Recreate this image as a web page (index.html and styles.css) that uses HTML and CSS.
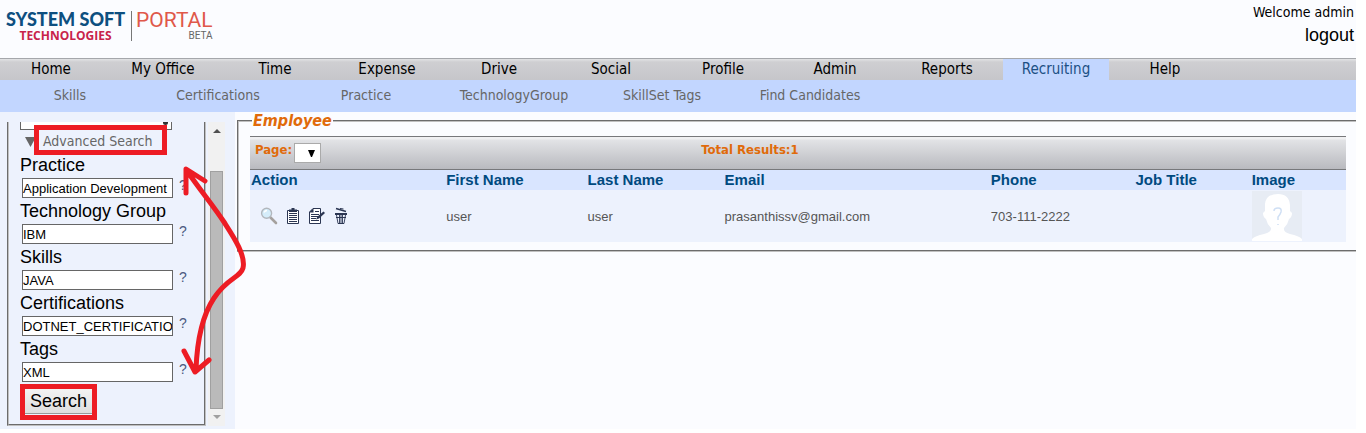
FILE: index.html
```html
<!DOCTYPE html>
<html lang="en">
<head>
<meta charset="utf-8">
<title>System Soft Portal</title>
<link rel="stylesheet" href="styles.css">
</head>
<body>
<div class="page">
  <header class="header">
    <div class="logo">
      <div class="brand"><span class="brand-name">SYSTEM SOFT</span><span class="brand-sub">TECHNOLOGIES</span></div>
      <div class="portal"><span class="portal-name">PORTAL</span><span class="portal-beta">BETA</span></div>
    </div>
    <div class="account"><span class="welcome">Welcome admin</span><a class="logout" href="#">logout</a></div>
  </header>
  <nav class="mainnav">
    <a href="#">Home</a><a href="#">My Office</a><a href="#">Time</a><a href="#">Expense</a><a href="#">Drive</a><a href="#">Social</a><a href="#">Profile</a><a href="#">Admin</a><a href="#">Reports</a><a href="#" class="active">Recruiting</a><a href="#">Help</a>
  </nav>
  <nav class="subnav">
    <a href="#">Skills</a><a href="#">Certifications</a><a href="#">Practice</a><a href="#">TechnologyGroup</a><a href="#">SkillSet Tags</a><a href="#">Find Candidates</a>
  </nav>
  <div class="content">
    <aside class="sidebar">
      <form class="panel">
        <div class="cut-field"><span></span></div>
        <button type="button" class="advanced"><svg width="11" height="10" viewBox="0 0 11 10"><path d="M0 0H11L5.5 10Z" fill="#666"/></svg>Advanced Search</button>
        <label for="practice">Practice</label>
        <div class="field"><input id="practice" value="Application Development"><span>?</span></div>
        <label for="group">Technology Group</label>
        <div class="field"><input id="group" value="IBM"><span>?</span></div>
        <label for="skills">Skills</label>
        <div class="field"><input id="skills" value="JAVA"><span>?</span></div>
        <label for="certs">Certifications</label>
        <div class="field"><input id="certs" value="DOTNET_CERTIFICATION"><span>?</span></div>
        <label for="tags">Tags</label>
        <div class="field"><input id="tags" value="XML"><span>?</span></div>
        <button type="button" class="search">Search</button>
      </form>
      <div class="scrollbar">
        <svg width="8" height="4" viewBox="0 0 8 4"><path d="M0 4L4 0L8 4Z" fill="#505050"/></svg>
        <div class="thumb"></div>
        <svg width="8" height="4" viewBox="0 0 8 4"><path d="M0 0L4 4L8 0Z" fill="#a0a0a0"/></svg>
      </div>
    </aside>
    <main class="main">
      <fieldset class="results">
        <legend>Employee</legend>
        <div class="toolbar">
          <label for="page">Page:</label>
          <div class="pager"><select id="page"><option></option></select><svg width="7" height="7" viewBox="0 0 7 7"><path d="M0 0H7L4 7H3Z" fill="#000"/></svg></div>
          <span class="total">Total Results:1</span>
        </div>
        <table>
          <colgroup><col class="c-action"><col class="c-first"><col class="c-last"><col class="c-email"><col class="c-phone"><col class="c-job"><col class="c-image"></colgroup>
          <thead><tr><th>Action</th><th>First Name</th><th>Last Name</th><th>Email</th><th>Phone</th><th>Job Title</th><th>Image</th></tr></thead>
          <tbody><tr>
            <td><div class="actions">
              <button type="button" aria-label="View"><svg width="18" height="18" viewBox="0 0 18 18"><path d="M10.5 10.5L16 16" stroke="#a5a19e" stroke-width="2.6" stroke-linecap="round"/><circle cx="6.6" cy="6.3" r="5" fill="#d5edfa" stroke="#b2b7bd" stroke-width="1.4"/><path d="M4 5.5Q5 3.5 7 3.5" fill="none" stroke="#fff" stroke-width="1.4"/></svg></button>
              <button type="button" aria-label="Details"><svg width="18" height="18" viewBox="0 0 18 18"><path d="M3.500 3.500H14.500V16.500H3.500Z" fill="#fff" stroke="#2b3652"/><path d="M5 5V2.500H7.500V1H10.500V2.500H13V5Z" fill="#2b3652"/><path d="M5 6.500H13M5 8.500H13M5 10.500H13M5 12.500H13M5 14.500H13" stroke="#2b3652"/></svg></button>
              <button type="button" aria-label="Edit"><svg width="18" height="18" viewBox="0 0 18 18"><path d="M5 1.500H12.500V16.500H1.500V5Z" fill="#fff" stroke="#2b3652"/><path d="M1 5.500L5.500 1V5.500Z" fill="#2b3652"/><path d="M7 4.500H11M3 7.500H11M3 9.500H11M3 11.500H8M3 13.500H11" stroke="#2b3652"/><path d="M8 12.500L9.500 9.500L15.500 4.500L17 6L11 11.500Z" fill="#2b3652"/></svg></button>
              <button type="button" aria-label="Delete"><svg width="18" height="18" viewBox="0 0 18 18"><path d="M4 1.500L14 4.500" stroke="#2b3652" stroke-width="1.500"/><path d="M8 1.500L11.500 2" stroke="#2b3652"/><path d="M3 7H15" stroke="#2b3652" stroke-width="2"/><path d="M4.500 8L6 16.500M13.500 8L12 16.500M7.500 8V16M10.500 8V16M9 8V16" fill="none" stroke="#2b3652" stroke-width=".9"/><path d="M4 10.500H14M6 16.500H12" stroke="#2b3652"/></svg></button>
            </div></td>
            <td>user</td><td>user</td><td>prasanthissv@gmail.com</td><td>703-111-2222</td><td></td>
            <td><svg class="avatar" width="50" height="50" viewBox="0 0 50 50"><rect width="50" height="50" fill="#e7ecf4"/><path d="M0 50V48Q3 45 12 43Q20 41 19 37Q15 33 14 28Q11 26 11 22L13 20V13Q14 3 26 3Q37 3 38 14V20L40 22Q40 26 37 28Q36 33 32 37Q31 41 38 43Q47 45 50 48V50Z" fill="#fff"/><path d="M22 20Q22 17 26 17Q30 17 29 21Q28 24 26 26V29M26 33V34" fill="none" stroke="#cfdff4" stroke-width="1.500"/></svg></td>
          </tr></tbody>
        </table>
      </fieldset>
    </main>
  </div>
  <svg class="markup" width="260" height="433" viewBox="0 0 260 433" fill="none" stroke="#ed1c24">
    <rect x="36.500" y="127.500" width="128" height="25" stroke-width="5"/>
    <rect x="22.500" y="386.500" width="72" height="31" stroke-width="5"/>
    <path d="M187 171C201 191 214 207 224 222C233 236 246 255 243 268C240 278 228 277 214 298C202 316 197 340 196 370M186 193L186 169L205 181M184 351L195 372L209 360" stroke-width="5" stroke-linecap="round" stroke-linejoin="round"/>
  </svg>
</div>
</body>
</html>
```
FILE: styles.css
```css
* { box-sizing: border-box; }
body { margin: 0; background: #fff; font-family: "Liberation Sans", Arial, sans-serif; color: #000; }
a { color: inherit; text-decoration: none; }
button { font: inherit; border: 0; background: none; padding: 0; }
svg { display: block; }
.page { position: relative; margin: 0 10px 4px 0; background: #fbfcff; }
.header { display: flex; justify-content: space-between; height: 58px; padding: 2px 2px 0 6px; }
.logo { display: flex; padding-top: 6px; gap: 6px; }
.brand { display: flex; flex-direction: column; align-items: center; padding-top: 1px; }
.brand-name { color: #0d4f80; font: 900 18px/20px Lato, sans-serif; }
.brand-sub { color: #c8234a; font: bold 12px/14px "Open Sans", sans-serif; }
.portal { display: flex; flex-direction: column; align-items: flex-end; border-left: 1px solid #777; padding-left: 4px; height: 30px; margin-top: 3px; font-family: Roboto, sans-serif; }
.portal-name { color: #e0584a; font-size: 21px; line-height: 19px; }
.portal-beta { color: #666; font-size: 10px; line-height: 12px; }
.account { display: flex; flex-direction: column; align-items: flex-end; }
.welcome { font: 14px/20px "DejaVu Sans Condensed", Tahoma, sans-serif; }
.logout { font-size: 18px; line-height: 26px; }
.mainnav, .subnav { display: flex; font-family: "DejaVu Sans Condensed", Tahoma, sans-serif; text-align: center; white-space: nowrap; }
.mainnav { height: 22px; border-top: 1px solid #a5a7ab; background: linear-gradient(#e2e3e5, #cfcfd2 3px, #c6c6ca); font-size: 15px; line-height: 21px; }
.mainnav a { flex: 0 0 112px; }
.mainnav a:first-child { flex-basis: 107px; padding-right: 5px; }
.mainnav .active { flex-basis: 106px; background: #c2d6ff; color: #1c5084; }
.subnav { height: 32px; background: #c2d6ff; color: #666; font-size: 14px; line-height: 30px; }
.subnav a { flex: 0 0 148px; }
.subnav a:first-child { flex-basis: 144px; padding-right: 4px; }
.content { display: flex; align-items: stretch; }
.sidebar { flex: 0 0 235px; display: flex; padding: 10px 10px 3px 7px; background: #edf2fd; }
.panel { display: flex; flex-direction: column; align-items: flex-start; width: 199px; border: 2px groove #c0c0c0; border-top: 0; padding: 0 0 10px 11px; }
.cut-field { width: 152px; height: 8px; border: 1px solid #666; border-top: 0; background: #fff; }
.cut-field span { display: block; width: 5px; height: 3px; margin-left: 142px; background: #333; border-radius: 0 0 4px 4px; }
.advanced { display: flex; align-items: center; gap: 7px; height: 23px; margin-left: 5px; color: #666; font: 14px/23px "DejaVu Sans Condensed", Tahoma, sans-serif; white-space: nowrap; }
.panel label { font-size: 18px; line-height: 25px; }
.field { display: flex; align-items: flex-start; gap: 6px; padding-left: 2px; height: 21px; }
.field input { width: 151px; height: 20px; padding: 0; border: 1px solid #666; background: #fff; font: 13px "Liberation Sans", Arial, sans-serif; color: #000; }
.field span { color: #4c5a80; font-size: 14px; line-height: 14px; }
.search { margin: 6px 0 0 5px; width: 67px; height: 25px; border-bottom: 1px solid #999; background: linear-gradient(#f3f3f3, #dedede); font-size: 18px; line-height: 22px; }
.scrollbar { display: flex; flex-direction: column; align-items: center; width: 17px; margin-left: 2px; padding: 7px 0; background: #f1f1f1; }
.thumb { width: 13px; flex: 1; margin: 38px 0 6px; background: #bababa; border: 1px solid #a0a0a0; }
.main { flex: 1; min-width: 0; padding-left: 2px; }
.results { margin: 0; border: 2px groove #c0c0c0; border-right: 0; padding: 6px 10px 8px 11px; min-width: 0; }
legend { padding: 0 1px; margin-left: 2px; color: #e06a0a; font: italic bold 16px/18px "DejaVu Sans Condensed", Tahoma, sans-serif; }
.toolbar { display: flex; align-items: flex-start; height: 34px; padding: 4px 5px; border-top: 1px solid #77787b; border-bottom: 1px solid #77787b; background: linear-gradient(#f0f0f2 2px, #e2e3e6 3px, #b9babf); color: #e06a0a; font: bold 13px/18px "DejaVu Sans Condensed", Tahoma, sans-serif; }
.pager { display: grid; align-items: center; width: 27px; margin: 2px 0 0 2px; }
.pager select { grid-area: 1 / 1; appearance: none; width: 27px; height: 20px; border: 1px solid #aaa; background: #fff; }
.pager svg { grid-area: 1 / 1; margin-left: 14px; pointer-events: none; }
.total { flex: 1; margin-left: 35%; }
table { width: 100%; table-layout: fixed; border-collapse: collapse; }
.c-action { width: 17.9%; }
.c-first { width: 12.9%; }
.c-last { width: 12.5%; }
.c-email { width: 24.3%; }
.c-phone { width: 13.2%; }
.c-job { width: 10.6%; }
th { height: 20px; padding: 0; text-align: left; background: #d9e5ff; color: #004a80; font-size: 15px; line-height: 20px; }
th:first-child { padding-left: 1px; }
td { padding: 1px 0; background: #edf2fd; color: #555; font-size: 13px; }
.actions { display: flex; gap: 6px; padding-left: 10px; }
.markup { position: absolute; left: 0; top: 0; pointer-events: none; }
```
